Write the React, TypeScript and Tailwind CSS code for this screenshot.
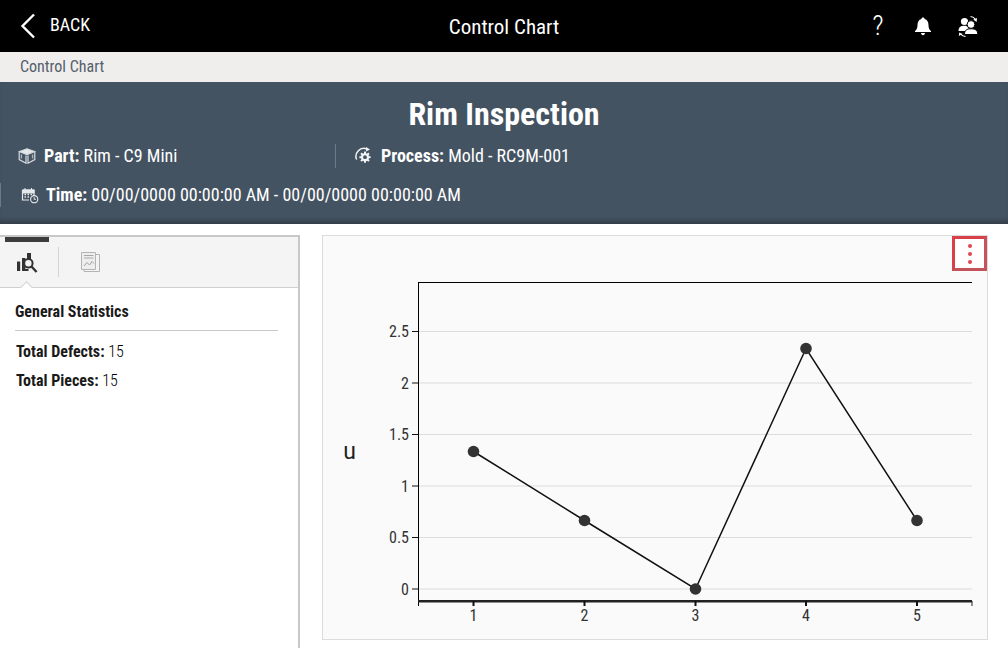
import React from "react";

const pts = [
  [473.5, 451.5],
  [584.5, 520.5],
  [695.5, 589],
  [806, 348.5],
  [917, 520.5],
];
const yt = [
  ["2.5", 331.5],
  ["2", 383],
  ["1.5", 434.5],
  ["1", 486],
  ["0.5", 537.5],
  ["0", 589],
] as const;

function Chart() {
  return (
    <svg width={664} height={403} viewBox="323 236 664 403" className="block" fontFamily="Roboto, sans-serif" style={{ fontStretch: "75%" }}>
      {yt.map(([l, y]) => (
        <g key={l}>
          <line x1={419} x2={972} y1={y} y2={y} stroke="#dcdcdc" strokeWidth={1} />
          <line x1={412} x2={419} y1={y} y2={y} stroke="#111" strokeWidth={1} />
          <text x={409} y={y + 5.5} textAnchor="end" fontSize={16} fill="#333">{l}</text>
        </g>
      ))}
      <line x1={418.5} x2={972} y1={282.5} y2={282.5} stroke="#000" />
      <line x1={418.5} x2={418.5} y1={282} y2={606} stroke="#000" />
      <line x1={418} x2={972} y1={601.2} y2={601.2} stroke="#222" strokeWidth={2.4} />
      <line x1={972} x2={972} y1={601} y2={606} stroke="#222" />
      {pts.map(([x], i) => (
        <g key={i}>
          <line x1={x} x2={x} y1={601} y2={606} stroke="#111" strokeWidth={2} />
          <text x={x} y={621} textAnchor="middle" fontSize={16} fill="#333">{i + 1}</text>
        </g>
      ))}
      <polyline points={pts.map((p) => p.join(",")).join(" ")} fill="none" stroke="#111" strokeWidth={1.5} />
      {pts.map(([x, y], i) => (
        <circle key={i} cx={x} cy={y} r={5.8} fill="#333" />
      ))}
      <text x={349.5} y={459} textAnchor="middle" fontSize={23} fill="#222" style={{ fontStretch: "100%" }}>u</text>
    </svg>
  );
}

function Cube() {
  return (
    <svg width={18} height={16} viewBox="0 0 18 16" fill="none" stroke="#d5d9de" strokeWidth={1.2}>
      <path d="M9 0.8 L16.8 3.6 L9 6.6 L1.2 3.6 Z" fill="#e4e7ea" />
      <path d="M1.2 4 V11.6 L8 15.2 V7.4 M16.8 4 V11.6 L10 15.2 V7.4" />
      <path d="M3.4 6.4 V10.6 M14.6 6.4 V10.6" stroke="#aab1b9" strokeWidth={1.4} />
    </svg>
  );
}

function Gear() {
  const teeth = [0, 45, 90, 135];
  return (
    <svg width={18} height={18} viewBox="0 0 18 18" fill="none" stroke="#f2f3f5">
      <circle cx={10} cy={10.2} r={4} fill="#f2f3f5" stroke="none" />
      {teeth.map((a) => (
        <line key={a} x1={10} x2={10} y1={4.6} y2={15.8} strokeWidth={2} transform={`rotate(${a} 10 10.2)`} />
      ))}
      <circle cx={10} cy={10.2} r={1.9} fill="#445362" stroke="none" />
      <path d="M1.6 12.5 A8 8 0 0 1 11.5 1.8" strokeWidth={1.5} />
      <path d="M11 0 L15 2.4 L11 4.6 Z" fill="#f2f3f5" stroke="none" />
    </svg>
  );
}

function Calendar() {
  return (
    <svg width={18} height={17} viewBox="0 0 18 17" fill="none" stroke="#e6e9ec">
      <path d="M1.5 3 H13 V9 M8 13 H1.5 V3" strokeWidth={1.2} />
      <path d="M1.5 3 H13 V6 H1.5 Z M4 1 V3.5 M10.5 1 V3.5" fill="#e6e9ec" strokeWidth={1} />
      <path d="M3.5 7.5 H5 M6.5 7.5 H8 M9.5 7.5 H11 M3.5 10 H5 M6.5 10 H8" strokeWidth={1.5} />
      <circle cx={13.2} cy={12.2} r={3.6} strokeWidth={1.1} />
      <path d="M13.2 10 V12.4 H15" strokeWidth={0.9} />
    </svg>
  );
}

function Users() {
  return (
    <svg width={22} height={22} viewBox="0 0 22 22" fill="#fff">
      <circle cx={7.5} cy={6.5} r={3.6} />
      <path d="M1.5 16 C1.5 12 4 10.8 7.5 10.8 C10 10.8 12 12 12 16 Z" />
      <circle cx={14} cy={9.5} r={3.9} stroke="#000" strokeWidth={1} />
      <path d="M7.5 19.5 C7.5 15 10 13.8 14 13.8 C18 13.8 20.8 15 20.8 19.5 Z" stroke="#000" strokeWidth={1} />
      <path d="M13.5 1.5 C15.5 1.7 17.3 2.5 18.3 4.5" fill="none" stroke="#fff" strokeWidth={1.1} />
      <path d="M16.3 4.5 L20 3.1 L19.6 6.9 Z" />
      <path d="M8.5 21.5 C6.5 21.3 4.7 20.5 3.8 19" fill="none" stroke="#fff" strokeWidth={1.1} />
      <path d="M1.8 21 L2.2 17.5 L5.6 19 Z" />
    </svg>
  );
}

function Bell() {
  return (
    <svg width={18} height={19} viewBox="0 0 18 19" fill="#fff">
      <path d="M9 0.5 C10 0.5 10.6 1.2 10.6 2 C13.4 2.8 14.5 5 14.5 8 C14.5 11 15.2 12.6 17 14 V15 H1 V14 C2.8 12.6 3.5 11 3.5 8 C3.5 5 4.6 2.8 7.4 2 C7.4 1.2 8 0.5 9 0.5 Z" />
      <path d="M7 16 H11 C11 17.4 10 18.2 9 18.2 C8 18.2 7 17.4 7 16 Z" />
    </svg>
  );
}

function StatsIcon() {
  return (
    <svg width={22} height={20} viewBox="0 0 22 20" fill="#333">
      <rect x={1} y={8.5} width={3.2} height={9.5} />
      <rect x={6} y={5} width={3.4} height={13} />
      <rect x={11} y={0} width={4} height={7} />
      <circle cx={12.4} cy={10.2} r={4.2} fill="#f4f4f4" stroke="#333" strokeWidth={2} />
      <path d="M15.5 13.5 L20.6 19" stroke="#333" strokeWidth={2.4} />
      <rect x={9} y={16} width={3.5} height={2} />
    </svg>
  );
}

function ReportIcon() {
  return (
    <svg width={19} height={20} viewBox="0 0 19 20" fill="none" stroke="#b4b4b4" strokeWidth={1}>
      <path d="M0.5 0.5 H14.5 V17.5 H0.5 Z" fill="#eeeeee" />
      <path d="M14.5 2.5 H18.5 V19.5 H3 V17.5" />
      <path d="M3 3.5 H12.5 M3 6 H12.5" stroke="#a8a8a8" />
      <path d="M3 14 L6 10.5 L8.5 13 L11 9.5 L13 11.5" stroke="#a0a0a0" />
    </svg>
  );
}

export default function App() {
  return (
    <div className="w-[1008px] h-[648px] overflow-hidden bg-white font-['Roboto',sans-serif] [font-stretch:75%]">
      <header className="h-[52px] bg-black text-white flex items-center relative">
        <div className="flex items-center pl-[20px]">
          <svg width={16} height={26} viewBox="0 0 16 26" fill="none" stroke="#fff" strokeWidth={2.4}>
            <path d="M14 1.5 L2.5 13 L14 24.5" />
          </svg>
          <span className="ml-[14px] text-[18px] leading-none mb-[2px]">BACK</span>
        </div>
        <div className="text-center text-[21px] leading-none absolute inset-x-0 top-[17px]">Control Chart</div>
        <div className="ml-auto flex items-center pr-[29px] relative">
          <span className="text-[28px] font-light leading-none w-[18px] text-center">?</span>
          <div className="ml-[27px]"><Bell /></div>
          <div className="ml-[25px]"><Users /></div>
        </div>
      </header>
      <div className="h-[30px] bg-[#f0eeed] text-[#55606c] text-[16px] leading-[29px] pl-[20px]">Control Chart</div>
      <section className="h-[142px] bg-[#445362] text-white shadow-[inset_0_-6px_6px_-4px_rgba(0,0,0,0.35)] relative">
        <h1 className="text-center text-[32px] font-bold leading-none pt-[16px]">Rim Inspection</h1>
        <div className="flex mt-[14px] text-[18px] leading-[24px]">
          <div className="w-[336px] flex items-center gap-[8px] pl-[18px] h-[24px] border-r border-r-[#6d7a8b]">
            <Cube />
            <span><b>Part:</b> Rim - C9 Mini</span>
          </div>
          <div className="flex items-center gap-[8px] pl-[19px]">
            <Gear />
            <span><b>Process:</b> Mold - RC9M-001</span>
          </div>
        </div>
        <div className="flex mt-[15px] text-[18px] leading-[24px]">
          <div className="flex items-center gap-[7px] pl-[20px] h-[24px] border-l border-l-[#6d7a8b]">
            <Calendar />
            <span><b>Time:</b> 00/00/0000 00:00:00 AM - 00/00/0000 00:00:00 AM</span>
          </div>
        </div>
      </section>
      <main className="flex h-[424px] pt-[11px]">
        <aside className="w-[300px] h-[413px] border-t-2 border-r-2 border-[#c8c8c8] text-[#1a1a1a] shrink-0">
          <div className="h-[51px] bg-[#f4f4f4] border-b border-[#cfcfcf] flex relative">
            <div className="w-[58px] relative flex items-center pl-[16px] pt-[2px]">
              <div className="absolute top-0 left-[5px] w-[44px] h-[5px] bg-[#3c3c3c]" />
              <StatsIcon />
              <div className="absolute left-[22px] -bottom-[5px] w-[9px] h-[9px] bg-white border-t border-l border-[#cfcfcf] rotate-45" />
            </div>
            <div className="w-px h-[30px] bg-[#d4d4d4] self-center" />
            <div className="pl-[22px] self-center"><ReportIcon /></div>
          </div>
          <div className="pl-[15px] pt-[14px]">
            <div className="w-[263px] h-[29px] border-b border-[#c9c9c9] font-bold text-[16px] leading-[20px]">General Statistics</div>
            <div className="pl-[1px] pt-[6px] text-[16px] leading-[29px]">
              <div><b>Total Defects:</b> <span className="font-light text-black">15</span></div>
              <div><b>Total Pieces:</b> <span className="font-light text-black">15</span></div>
            </div>
          </div>
        </aside>
        <div className="ml-[22px] w-[666px] h-[405px] bg-[#fafafa] border border-[#dcdcdc] relative">
          <Chart />
          <div className="absolute top-0 right-0 w-[35px] h-[35px] border-[3px] border-[#d9404a] border-r-[#c4545b] border-b-[#c4545b] bg-white flex flex-col items-center justify-center gap-[4px]">
            <span className="w-[4px] h-[4px] rounded-full bg-[#e04850]" />
            <span className="w-[4px] h-[4px] rounded-full bg-[#e04850]" />
            <span className="w-[4px] h-[4px] rounded-full bg-[#e04850]" />
          </div>
        </div>
      </main>
    </div>
  );
}
